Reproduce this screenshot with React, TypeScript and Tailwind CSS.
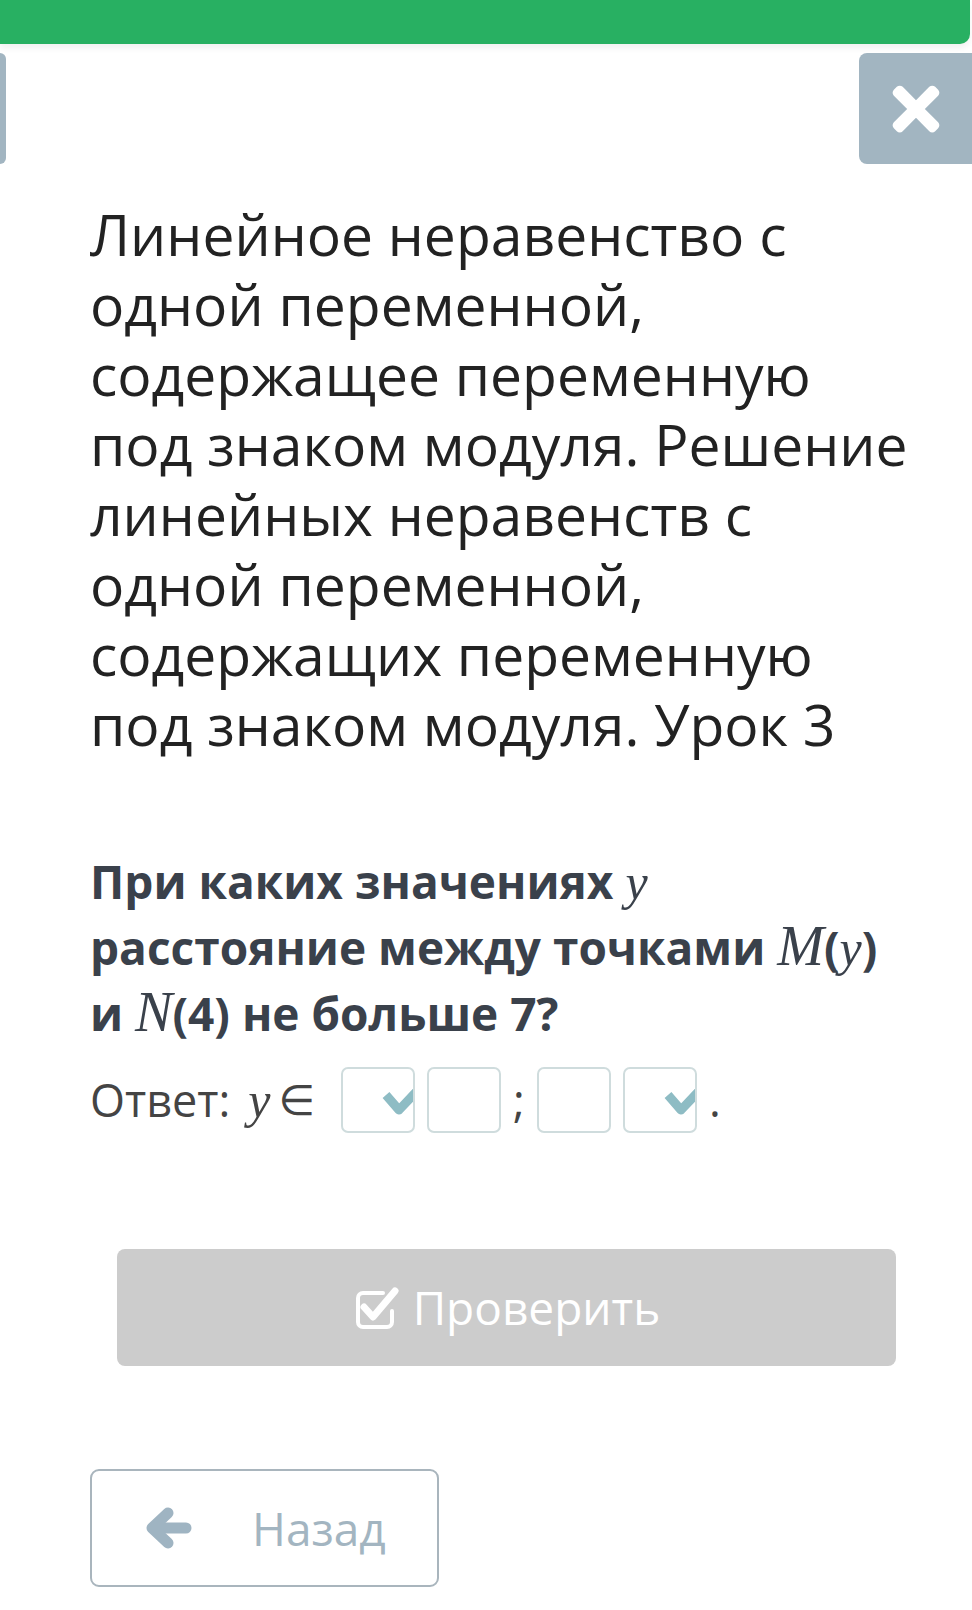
import React from "react";
import { FaTimes } from "react-icons/fa";

const sans = "font-['Open_Sans','Noto_Sans',sans-serif]";
const math = "font-['Liberation_Serif','DejaVu_Serif',serif] italic font-normal";

function CheckSquare() {
  return (
    <svg width="48" height="46" viewBox="0 0 48 46" fill="none">
      <path
        d="M30 8H10a5 5 0 0 0-5 5v24a5 5 0 0 0 5 5h24a5 5 0 0 0 5-5V26"
        stroke="white"
        strokeWidth="4"
        strokeLinecap="round"
      />
      <path d="M11 22l9 10L42 6" stroke="white" strokeWidth="7" strokeLinecap="round" strokeLinejoin="round" />
    </svg>
  );
}

function ArrowLeft() {
  return (
    <svg width="48" height="44" viewBox="0 0 48 44" fill="none">
      <path d="M12 22h30" stroke="#9fb4c2" strokeWidth="11" strokeLinecap="round" />
      <path d="M24 7L8 22l16 15" stroke="#9fb4c2" strokeWidth="11" strokeLinecap="round" strokeLinejoin="round" />
    </svg>
  );
}

function SelectBox() {
  return (
    <div className="relative w-[74px] h-[66px] rounded-[7px] border-2 border-[#cfdcdd] bg-white overflow-hidden">
      <svg className="absolute right-[-4px] top-[20px]" width="36" height="28" viewBox="0 0 36 28">
        <path d="M5 6l13 15L36 2" stroke="#8ebcc4" strokeWidth="9" fill="none" strokeLinejoin="round" />
      </svg>
    </div>
  );
}

function InputBox() {
  return <div className="w-[74px] h-[66px] rounded-[7px] border-2 border-[#cfdcdd] bg-white" />;
}

export default function App() {
  return (
    <div className={`w-[972px] min-h-[1610px] bg-white ${sans}`}>
      <div className="h-[44px] w-[970px] bg-[#28b062] rounded-br-[10px] shadow-[0_4px_6px_rgba(0,0,0,0.06)]" />

      <div className="flex justify-between items-start pt-[9px]">
        <div className="w-[6px] h-[111px] bg-[#a2b5c1] rounded-r-[8px]" />
        <div className="w-[113px] h-[111px] bg-[#a2b5c1] rounded-l-[8px] flex items-center justify-center">
          <FaTimes className="text-white" size={68} />
        </div>
      </div>

      <div className="pl-[90px] pr-[46px]">
        <h1 className="mt-[35px] text-[57px] leading-[70px] text-[#222] font-normal">
          Линейное неравенство с одной переменной, содержащее переменную под знаком модуля. Решение линейных неравенств с одной переменной, содержащих переменную под знаком модуля. Урок 3
        </h1>

        <p className="mt-[90px] text-[46px] leading-[64px] font-bold text-[#3a414b]">
          При каких значениях <span className={`${math} text-[50px]`}>y</span>
          <br />
          расстояние между точками <span className={`${math} text-[56px]`}>M</span>(<span className={`${math} text-[50px]`}>y</span>)
          <br />
          и <span className={`${math} text-[56px]`}>N</span>(4) не больше 7?
        </p>

        <div className="mt-[22px] flex items-center text-[45px] text-[#444] h-[66px]">
          <span>Ответ:</span>
          <span className={`${math} ml-[18px] text-[50px]`}>y</span>
          <span className="ml-[8px] font-['DejaVu_Sans',sans-serif] text-[42px]">∈</span>
          <div className="ml-[26px] flex items-center gap-[12px]">
            <SelectBox />
            <InputBox />
            <span>;</span>
            <InputBox />
            <SelectBox />
            <span>.</span>
          </div>
        </div>
      </div>

      <div className="mt-[116px]">
        <button className="w-[779px] ml-[117px] h-[117px] rounded-[8px] bg-[#cccccc] flex items-center justify-center gap-[12px] text-white text-[46px]">
          <CheckSquare />
          <span>Проверить</span>
        </button>
      </div>

      <div className="pl-[90px] mt-[103px] pb-[23px]">
        <button className="w-[349px] h-[118px] rounded-[9px] border-2 border-[#a9b5bd] bg-white flex items-center pl-[52px] text-[#a3b5c1] text-[46px]">
          <ArrowLeft />
          <span className="ml-[60px]">Назад</span>
        </button>
      </div>
    </div>
  );
}
